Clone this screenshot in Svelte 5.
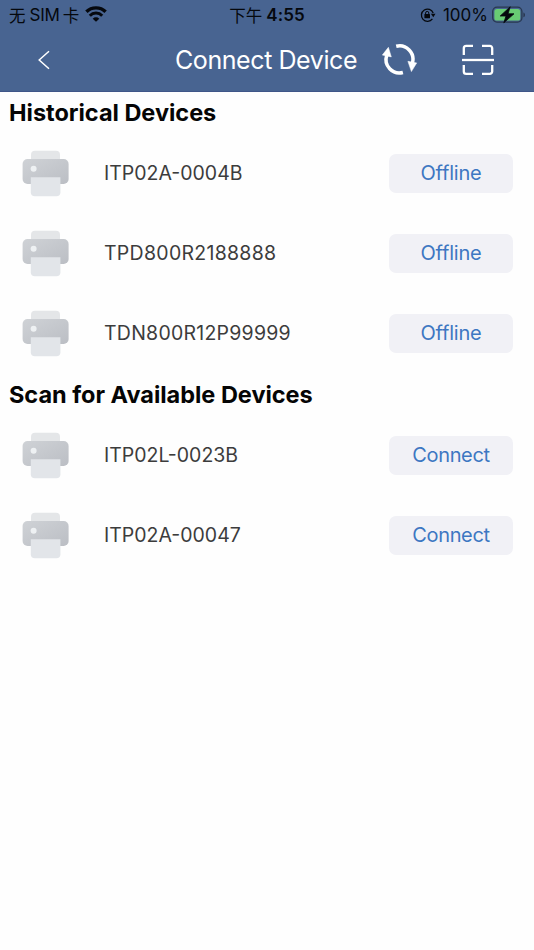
<script>
  const sections = [
    {
      title: 'Historical Devices',
      devices: [
        { name: 'ITP02A-0004B', spacing: '0px', action: 'Offline' },
        { name: 'TPD800R2188888', spacing: '0.28px', action: 'Offline' },
        { name: 'TDN800R12P99999', spacing: '0.24px', action: 'Offline' }
      ]
    },
    {
      title: 'Scan for Available Devices',
      devices: [
        { name: 'ITP02L-0023B', spacing: '0px', action: 'Connect' },
        { name: 'ITP02A-00047', spacing: '0px', action: 'Connect' }
      ]
    }
  ];
</script>

<div class="screen">
  <header>
    <div class="status">
      <div class="carrier">
        <span class="cjk">无</span><span class="sim">SIM</span><span class="cjk">卡</span>
        <svg class="wifi" width="22" height="16" viewBox="0 0 22 16">
          <path d="M1.4 5.8a13.6 13.6 0 0 1 19.2 0" fill="none" stroke="#05080d" stroke-width="3.4" />
          <path d="M4.8 9.7a8.7 8.7 0 0 1 12.4 0" fill="none" stroke="#05080d" stroke-width="3" />
          <path d="M11 15.8l-3.3-3.1a4.6 4.6 0 0 1 6.6 0z" fill="#05080d" />
        </svg>
      </div>
      <div class="clock"><span class="cjk">下午</span><span class="time">4:55</span></div>
      <div class="power">
        <svg class="lock" width="16" height="16" viewBox="0 0 16 16">
          <path d="M12.4 11.9A6.1 6.1 0 1 1 13.2 6" fill="none" stroke="#05080d" stroke-width="1.3" />
          <path d="M10.9 6.8h4.6l-2.2 3.4z" fill="#05080d" />
          <rect x="4.4" y="7" width="5.6" height="4.3" rx=".6" fill="#05080d" />
          <path d="M5.6 7.2V6a1.6 1.6 0 0 1 3.2 0v1.2" fill="none" stroke="#05080d" stroke-width="1" />
        </svg>
        <span class="percent">100%</span>
        <svg class="battery" width="34" height="18" viewBox="0 0 34 18">
          <rect x=".7" y="1.2" width="29.2" height="15" rx="4.4" fill="none" stroke="#28384f" stroke-width="1.3" />
          <rect x="2.4" y="2.9" width="25.8" height="11.6" rx="2.6" fill="#68cc73" />
          <path d="M31.4 6.4c2.1.6 2.1 4.2 0 4.8z" fill="#28384f" />
          <path d="M18.2 .8L8.2 10h5.8l-2.2 6.8L22 7.8h-6z" fill="#05080d" stroke="#05080d" stroke-width=".8" stroke-linejoin="round" />
        </svg>
      </div>
    </div>
    <nav>
      <svg class="back" width="14" height="20" viewBox="0 0 14 20">
        <path d="M12 1.2L2.2 10 12 18.8" fill="none" stroke="#fff" stroke-width="1.5" />
      </svg>
      <h1>Connect Device</h1>
      <svg class="refresh" width="36" height="34" viewBox="0 0 36 34">
        <g fill="none" stroke="#fff" stroke-width="3.5">
          <path d="M14.2 3.3A13.4 13.4 0 0 1 30.4 20" />
          <path d="M20.9 29.5A13.4 13.4 0 0 1 4.7 12.4" />
        </g>
        <path d="M25.9 18.3l8.8 1.6-5.3 8.7z" fill="#fff" stroke="#fff" stroke-width=".5" />
        <path d="M6.4 4.3l2.9 9.6-9-1.8z" fill="#fff" stroke="#fff" stroke-width=".5" />
      </svg>
      <svg class="scan" width="32" height="32" viewBox="0 0 32 32">
        <g fill="none" stroke="#fff" stroke-width="2.3">
          <path d="M1.8 11V4.2a2.4 2.4 0 0 1 2.4-2.4H11M20 1.8h7.8a2.4 2.4 0 0 1 2.4 2.4V11M30.2 21v6.4a2.4 2.4 0 0 1-2.4 2.4H20M11 29.8H4.2a2.4 2.4 0 0 1-2.4-2.4V21" />
          <path d="M0 16h32" />
        </g>
      </svg>
    </nav>
  </header>

  <main>
    {#each sections as section}
      <section>
        <h2>{section.title}</h2>
        {#each section.devices as device}
          <div class="row">
            <svg class="printer" width="48" height="48" viewBox="0 0 48 48">
              <defs>
                <linearGradient id="printer-body" x1="0" y1="0" x2="1" y2="1">
                  <stop offset="0" stop-color="#cfd2d6" />
                  <stop offset="1" stop-color="#bbbec4" />
                </linearGradient>
              </defs>
              <rect x="9" y="1.8" width="29" height="16" rx="4" fill="#e4e6e8" />
              <rect x=".6" y="10" width="46" height="25" rx="5" fill="url(#printer-body)" />
              <circle cx="11.6" cy="19.8" r="3" fill="#eef1f3" />
              <path d="M8.8 28.2h29.6v15a4 4 0 0 1-4 4H12.8a4 4 0 0 1-4-4z" fill="#e2e5e9" />
            </svg>
            <span class="name" style="letter-spacing: {device.spacing}">{device.name}</span>
            <button class={device.action.toLowerCase()}>{device.action}</button>
          </div>
        {/each}
      </section>
    {/each}
  </main>
</div>

<style>
  :global(body) {
    background: #fefefe;
  }
  .screen {
    width: 534px;
    height: 950px;
    overflow: hidden;
    background: #fefefe;
    font-family: Inter, "Noto Sans CJK SC", sans-serif;
  }
  header {
    box-sizing: border-box;
    height: 92px;
    background: #486491;
    border-bottom: 1px solid #3f5688;
  }
  main {
    padding-top: 1px;
  }
  .status {
    display: grid;
    grid-template-columns: 1fr auto 1fr;
    align-items: center;
    height: 30px;
    padding: 0 8px 0 9px;
    color: #05080d;
    font-size: 17px;
    line-height: 30px;
    white-space: nowrap;
  }
  .carrier,
  .clock,
  .power {
    display: flex;
    align-items: center;
  }
  .clock {
    margin-left: -1px;
  }
  .cjk {
    font-family: "Noto Sans CJK SC", sans-serif;
    font-size: 16.5px;
  }
  .sim {
    margin: 0 3px 0 4px;
    letter-spacing: -0.2px;
  }
  .wifi {
    margin-left: 6px;
    margin-top: -2px;
  }
  .time {
    margin-left: 4px;
    font-weight: 600;
    letter-spacing: 0.1px;
  }
  .power {
    justify-content: flex-end;
  }
  .percent {
    margin: 0 4px 0 7px;
  }
  .battery {
    margin-top: -1px;
  }
  nav {
    display: flex;
    align-items: center;
    height: 60px;
    padding-left: 37px;
  }
  h1 {
    width: 183px;
    margin: 0 0 0 124px;
    color: #fff;
    font-size: 25px;
    font-weight: 400;
    letter-spacing: -0.42px;
    line-height: 60px;
    white-space: nowrap;
  }
  .refresh {
    margin-left: 24px;
  }
  .scan {
    margin-left: 44px;
    margin-top: -1px;
  }
  section + section {
    margin-top: 2px;
  }
  h2 {
    height: 40px;
    margin: 0;
    padding-left: 9px;
    color: #050505;
    font-size: 23.5px;
    font-weight: 700;
    letter-spacing: -0.02px;
    line-height: 40px;
    white-space: nowrap;
  }
  .row {
    display: flex;
    align-items: center;
    height: 80px;
    padding: 0 21px 0 22px;
  }
  .name {
    flex: 1;
    margin-left: 34px;
    color: #3c3c3c;
    font-size: 19.5px;
    white-space: nowrap;
  }
  button {
    width: 124px;
    height: 39px;
    padding: 0;
    border: 0;
    border-radius: 7px;
    background: #f1f1f6;
    color: #3d77c2;
    font: 400 20px Inter, sans-serif;
  }
  .offline {
    letter-spacing: -0.2px;
  }
  .connect {
    letter-spacing: -0.35px;
  }
</style>
